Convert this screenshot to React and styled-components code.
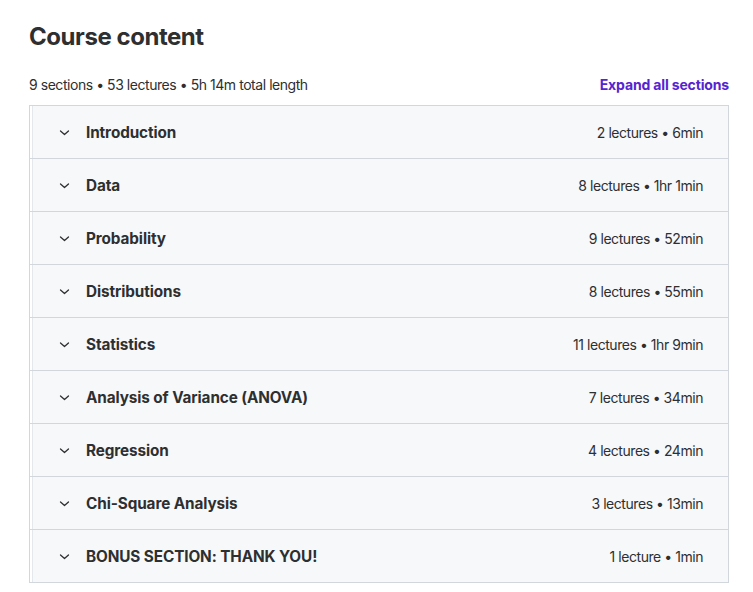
import React from "react";
import styled, { createGlobalStyle } from "styled-components";

const Global = createGlobalStyle`
  html, body { margin: 0; padding: 0; background: #fff; }
  body { font-family: Inter, "Noto Sans", sans-serif; color: #2d2f31; }
`;

const Page = styled.div`
  width: 700px;
  padding: 23px 0 0 29px;
`;

const Title = styled.h2`
  margin: 0;
  font-size: 24px;
  font-weight: 700;
  letter-spacing: -0.45px;
  line-height: 28px;
  color: #2d2f31;
`;

const Meta = styled.div`
  display: flex;
  justify-content: space-between;
  align-items: center;
  margin-top: 24px;
  height: 18px;
  margin-bottom: 12px;
`;

const Summary = styled.span`
  font-size: 14px;
  letter-spacing: -0.45px;
  color: #2d2f31;
`;

const ExpandLink = styled.button`
  border: 0;
  background: none;
  padding: 0;
  font-family: inherit;
  font-size: 14px;
  font-weight: 700;
  letter-spacing: -0.15px;
  color: #5624d0;
  cursor: pointer;
`;

const Panel = styled.div`
  border: 1px solid #d1d7dc;
  display: flex;
  flex-direction: column;
`;

const Row = styled.div`
  display: flex;
  align-items: center;
  height: 52px;
  padding: 0 25px 0 29px;
  background: #f7f8fa;
  box-shadow: inset 2px 0 0 #fff, inset 3px 0 0 #e4e8eb;
  border-bottom: ${(p) => (p.$last ? "0" : "1px solid #d1d7dc")};
`;

const Chevron = styled.svg`
  width: 11px;
  height: 11px;
  flex: none;
  margin-right: 16px;
`;

const SectionTitle = styled.span`
  flex: 1;
  font-size: 15.3px;
  font-weight: 700;
  letter-spacing: -0.1px;
  color: #2d2f31;
`;

const SectionMeta = styled.span`
  font-size: 14px;
  letter-spacing: -0.45px;
  color: #2d2f31;
`;

const sections = [
  ["Introduction", "2 lectures • 6min"],
  ["Data", "8 lectures • 1hr 1min"],
  ["Probability", "9 lectures • 52min"],
  ["Distributions", "8 lectures • 55min"],
  ["Statistics", "11 lectures • 1hr 9min"],
  ["Analysis of Variance (ANOVA)", "7 lectures • 34min"],
  ["Regression", "4 lectures • 24min"],
  ["Chi-Square Analysis", "3 lectures • 13min"],
  ["BONUS SECTION: THANK YOU!", "1 lecture • 1min"],
];

export default function App() {
  return (
    <>
      <Global />
      <Page>
        <Title>Course content</Title>
        <Meta>
          <Summary>9 sections • 53 lectures • 5h 14m total length</Summary>
          <ExpandLink>Expand all sections</ExpandLink>
        </Meta>
        <Panel>
          {sections.map(([t, m], i) => (
            <Row key={t} $last={i === sections.length - 1}>
              <Chevron viewBox="0 0 11 11">
                <path d="M1.5 4 L5.5 7.5 L9.5 4" fill="none" stroke="#2d2f31" strokeWidth="1.3" strokeLinecap="round" strokeLinejoin="round" />
              </Chevron>
              <SectionTitle>{t}</SectionTitle>
              <SectionMeta>{m}</SectionMeta>
            </Row>
          ))}
        </Panel>
      </Page>
    </>
  );
}
